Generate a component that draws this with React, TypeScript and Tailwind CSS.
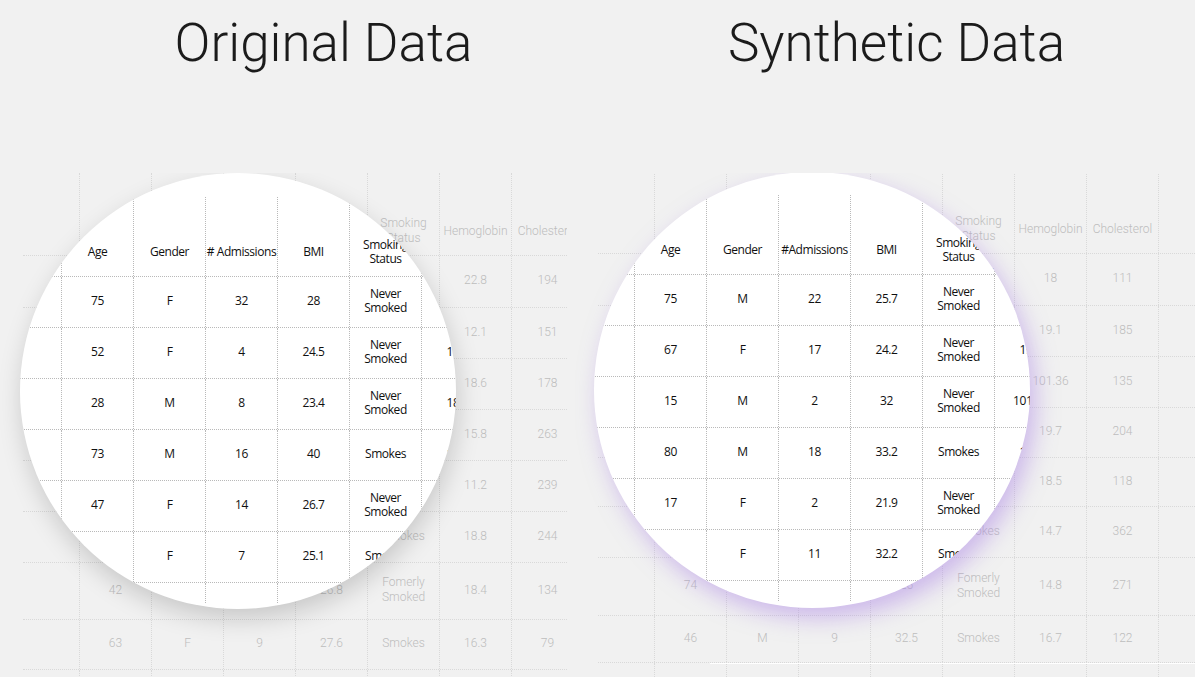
import React from 'react'

type Table = {
  title: string
  header: string[]
  rows: string[][]
}

const original: Table = {
  title: 'Original Data',
  header: ['Age', 'Gender', '# Admissions', 'BMI', 'Smoking\nStatus', 'Hemoglobin', 'Cholesterol'],
  rows: [
    ['75', 'F', '32', '28', 'Never\nSmoked', '22.8', '194'],
    ['52', 'F', '4', '24.5', 'Never\nSmoked', '12.1', '151'],
    ['28', 'M', '8', '23.4', 'Never\nSmoked', '18.6', '178'],
    ['73', 'M', '16', '40', 'Smokes', '15.8', '263'],
    ['47', 'F', '14', '26.7', 'Never\nSmoked', '11.2', '239'],
    ['', 'F', '7', '25.1', 'Smokes', '18.8', '244'],
    ['42', 'M', '11', '26.8', 'Fomerly\nSmoked', '18.4', '134'],
    ['63', 'F', '9', '27.6', 'Smokes', '16.3', '79'],
  ],
}

const synthetic: Table = {
  title: 'Synthetic Data',
  header: ['Age', 'Gender', '#Admissions', 'BMI', 'Smoking\nStatus', 'Hemoglobin', 'Cholesterol'],
  rows: [
    ['75', 'M', '22', '25.7', 'Never\nSmoked', '18', '111'],
    ['67', 'F', '17', '24.2', 'Never\nSmoked', '19.1', '185'],
    ['15', 'M', '2', '32', 'Never\nSmoked', '101.36', '135'],
    ['80', 'M', '18', '33.2', 'Smokes', '19.7', '204'],
    ['17', 'F', '2', '21.9', 'Never\nSmoked', '18.5', '118'],
    ['', 'F', '11', '32.2', 'Smokes', '14.7', '362'],
    ['74', 'F', '6', '26', 'Fomerly\nSmoked', '14.8', '271'],
    ['46', 'M', '9', '32.5', 'Smokes', '16.7', '122'],
  ],
}

// row heights of the faded table behind each lens, and of the sharp table inside it
const leftRows = ['h-[52px]', 'h-[51px]', 'h-[51px]', 'h-[51px]', 'h-[51px]', 'h-[51px]', 'h-[57px]', 'h-[50px]']
const rightRows = ['h-[52px]', 'h-[51px]', 'h-[51px]', 'h-[50px]', 'h-[49px]', 'h-[51px]', 'h-[58px]', 'h-[47px]']
const lensRows = ['h-[51px]', 'h-[51px]', 'h-[51px]', 'h-[51px]', 'h-[51px]', 'h-[51px]']

function Grid({ table, rowH, sharp }: { table: Table; rowH: string[]; sharp?: boolean }) {
  const line = sharp ? 'border-[#b9b9b9]' : 'border-[#d9d9d9]'
  const font = sharp
    ? "font-['Open_Sans',sans-serif] font-medium text-[12px] leading-[14px] tracking-[-0.45px] text-[#101010]"
    : "font-['Roboto',sans-serif] font-light text-[12px] leading-[15px] text-[#bdbdbd]"
  const cell = `w-[72px] shrink-0 border-l border-dotted ${line} flex items-center justify-center text-center whitespace-pre-line`
  const rows = table.rows.slice(0, rowH.length)

  return (
    <div className={`flex flex-col ${font}`}>
      <div className={`flex shrink-0 border-b border-dotted ${line} ${sharp ? 'h-[80px]' : 'h-[83px]'}`}>
        <div className="w-[56px] shrink-0" />
        {[...table.header, ''].map((h, i) => (
          <div key={i} className={`${cell} ${sharp ? 'pt-[30px]' : 'pt-[34px]'}`}>
            {h}
          </div>
        ))}
      </div>
      {rows.map((r, ri) => (
        <div key={ri} className={`flex shrink-0 border-b border-dotted ${line} ${rowH[ri]}`}>
          <div className="w-[56px] shrink-0" />
          {[...r, ''].map((v, i) => (
            <div key={i} className={`${cell} pb-[2px]`}>
              {v}
            </div>
          ))}
        </div>
      ))}
      {/* open row under the last line, only the column rules run on */}
      <div className={`flex shrink-0 ${sharp ? 'h-[20px]' : 'h-[50px]'}`}>
        <div className="w-[56px] shrink-0" />
        {Array.from({ length: 8 }).map((_, i) => (
          <div key={i} className={cell} />
        ))}
      </div>
    </div>
  )
}

function Panel({
  table,
  rowH,
  synth,
}: {
  table: Table
  rowH: string[]
  synth?: boolean
}) {
  return (
    <div className={`relative h-full overflow-hidden ${synth ? 'ml-[8px] flex-1' : 'w-[567px] shrink-0'}`}>
      <div className={`ml-[23px] ${synth ? 'mt-[-2px]' : ''}`}>
        <Grid table={table} rowH={rowH} />
      </div>
      {synth && <div className="absolute left-[135px] right-0 top-[490px] h-px bg-white" />}

      {/* the lens */}
      <div
        className={`absolute w-[436px] h-[436px] rounded-full bg-white overflow-hidden ${
          synth
            ? 'left-[19px] top-[-1px] shadow-[6px_10px_22px_rgba(170,130,230,0.5)]'
            : 'left-[20px] top-0 shadow-[2px_10px_24px_rgba(0,0,0,0.17)]'
        }`}
      >
        <div className={`absolute w-[620px] ${synth ? 'left-[-16px] top-[23px]' : 'left-[-15px] top-[24px]'}`}>
          <Grid table={table} rowH={lensRows} sharp />
        </div>
      </div>
    </div>
  )
}

export default function App() {
  return (
    <div className="w-[1195px] h-[677px] bg-[#f1f1f1] overflow-hidden flex flex-col">
      <div className="h-[173px] shrink-0 flex pl-[37px]">
        {[original, synthetic].map((t) => (
          <div
            key={t.title}
            className="w-[573px] shrink-0 text-center pt-[17px] font-['Roboto',sans-serif] font-light text-[53px] leading-none text-[#1b1b1b]"
          >
            {t.title}
          </div>
        ))}
      </div>
      <div className="flex flex-1 min-h-0">
        <Panel table={original} rowH={leftRows} />
        <Panel table={synthetic} rowH={rightRows} synth />
      </div>
    </div>
  )
}
